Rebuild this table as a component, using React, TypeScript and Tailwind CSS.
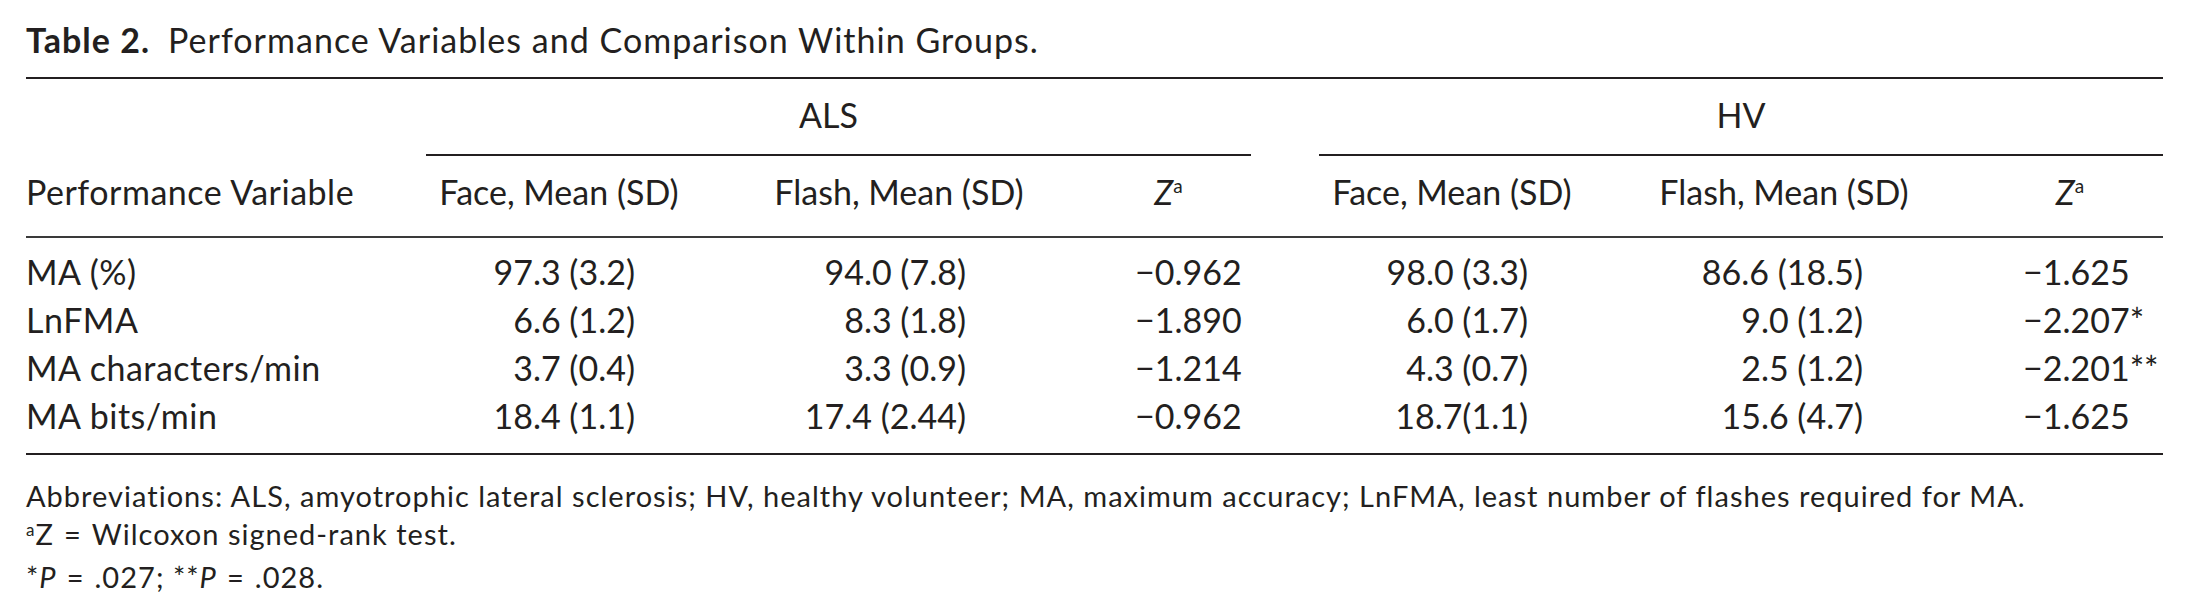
const cols = "grid grid-cols-[400px_266px_414px_145px_402px_262px_248px]"

const rows = [
  { name: "MA (%)", af: "97.3 (3.2)", afl: "94.0 (7.8)", az: "−0.962", hf: "98.0 (3.3)", hfl: "86.6 (18.5)", hz: "−1.625", mark: "" },
  { name: "LnFMA", af: "6.6 (1.2)", afl: "8.3 (1.8)", az: "−1.890", hf: "6.0 (1.7)", hfl: "9.0 (1.2)", hz: "−2.207", mark: "*" },
  { name: "MA characters/min", af: "3.7 (0.4)", afl: "3.3 (0.9)", az: "−1.214", hf: "4.3 (0.7)", hfl: "2.5 (1.2)", hz: "−2.201", mark: "**" },
  { name: "MA bits/min", af: "18.4 (1.1)", afl: "17.4 (2.44)", az: "−0.962", hf: "18.7(1.1)", hfl: "15.6 (4.7)", hz: "−1.625", mark: "" },
]

function Za() {
  return (
    <span>
      <span className="italic">Z</span>
      <span className="relative -top-[12px] text-[19px]">a</span>
    </span>
  )
}

export default function App() {
  return (
    <div className="w-[2189px] h-[610px] bg-white px-[26px] text-[#231f20] font-['Lato',sans-serif]">
      {/* Caption */}
      <div className="pt-[16px] text-[34px] leading-[48px] tracking-[0.03em]">
        <span className="font-bold">Table 2.</span>
        <span className="ml-[18px]">Performance Variables and Comparison Within Groups.</span>
      </div>

      <div className="mt-[13px] h-[2px] bg-[#231f20]" />

      {/* Group headers */}
      <div className={`${cols} mt-[12px] text-[34px] leading-[48px]`}>
        <div />
        <div className="col-span-3 flex flex-col">
          <div className="pr-[20px] text-center">ALS</div>
          <div className="mt-[15px] h-[2px] bg-[#231f20]" />
        </div>
        <div className="col-span-3 flex flex-col pl-[68px]">
          <div className="text-center">HV</div>
          <div className="mt-[15px] h-[2px] bg-[#231f20]" />
        </div>
      </div>

      {/* Column headers */}
      <div className={`${cols} mt-[12px] text-[34px] leading-[48px]`}>
        <div className="tracking-[0.015em]">Performance Variable</div>
        <div className="text-center">Face, Mean (SD)</div>
        <div className="text-center">Flash, Mean (SD)</div>
        <div className="pr-[20px] text-center">
          <Za />
        </div>
        <div className="text-center">Face, Mean (SD)</div>
        <div className="text-center">Flash, Mean (SD)</div>
        <div className="pl-[62px] text-center">
          <Za />
        </div>
      </div>

      <div className="mt-[14px] h-[2px] bg-[#3a3a3a]" />

      {/* Data */}
      <div className="mt-[10px] text-[34px] leading-[48px]">
        {rows.map((r) => (
          <div key={r.name} className={cols}>
            <div className="tracking-[0.015em]">{r.name}</div>
            <div className="pr-[57px] text-right">{r.af}</div>
            <div className="pr-[140px] text-right">{r.afl}</div>
            <div className="pl-[29px]">{r.az}</div>
            <div className="pr-[125px] text-right">{r.hf}</div>
            <div className="pr-[52px] text-right">{r.hfl}</div>
            <div className="pl-[108px]">
              {r.hz}
              {r.mark}
            </div>
          </div>
        ))}
      </div>

      <div className="mt-[13px] h-[2px] bg-[#231f20]" />

      {/* Footnotes */}
      <div className="mt-[22px] text-[29px] leading-[38px] tracking-[0.035em]">
        <div>
          Abbreviations: ALS, amyotrophic lateral sclerosis; HV, healthy volunteer; MA, maximum accuracy; LnFMA, least
          number of flashes required for MA.
        </div>
        <div>
          <span className="relative -top-[9px] text-[17px]">a</span>Z
          <span className="mx-[10px]">=</span>Wilcoxon signed-rank test.
        </div>
        <div>
          *<span className="italic">P</span>
          <span className="mx-[10px]">=</span>.027; **<span className="italic">P</span>
          <span className="mx-[10px]">=</span>.028.
        </div>
      </div>
    </div>
  )
}
